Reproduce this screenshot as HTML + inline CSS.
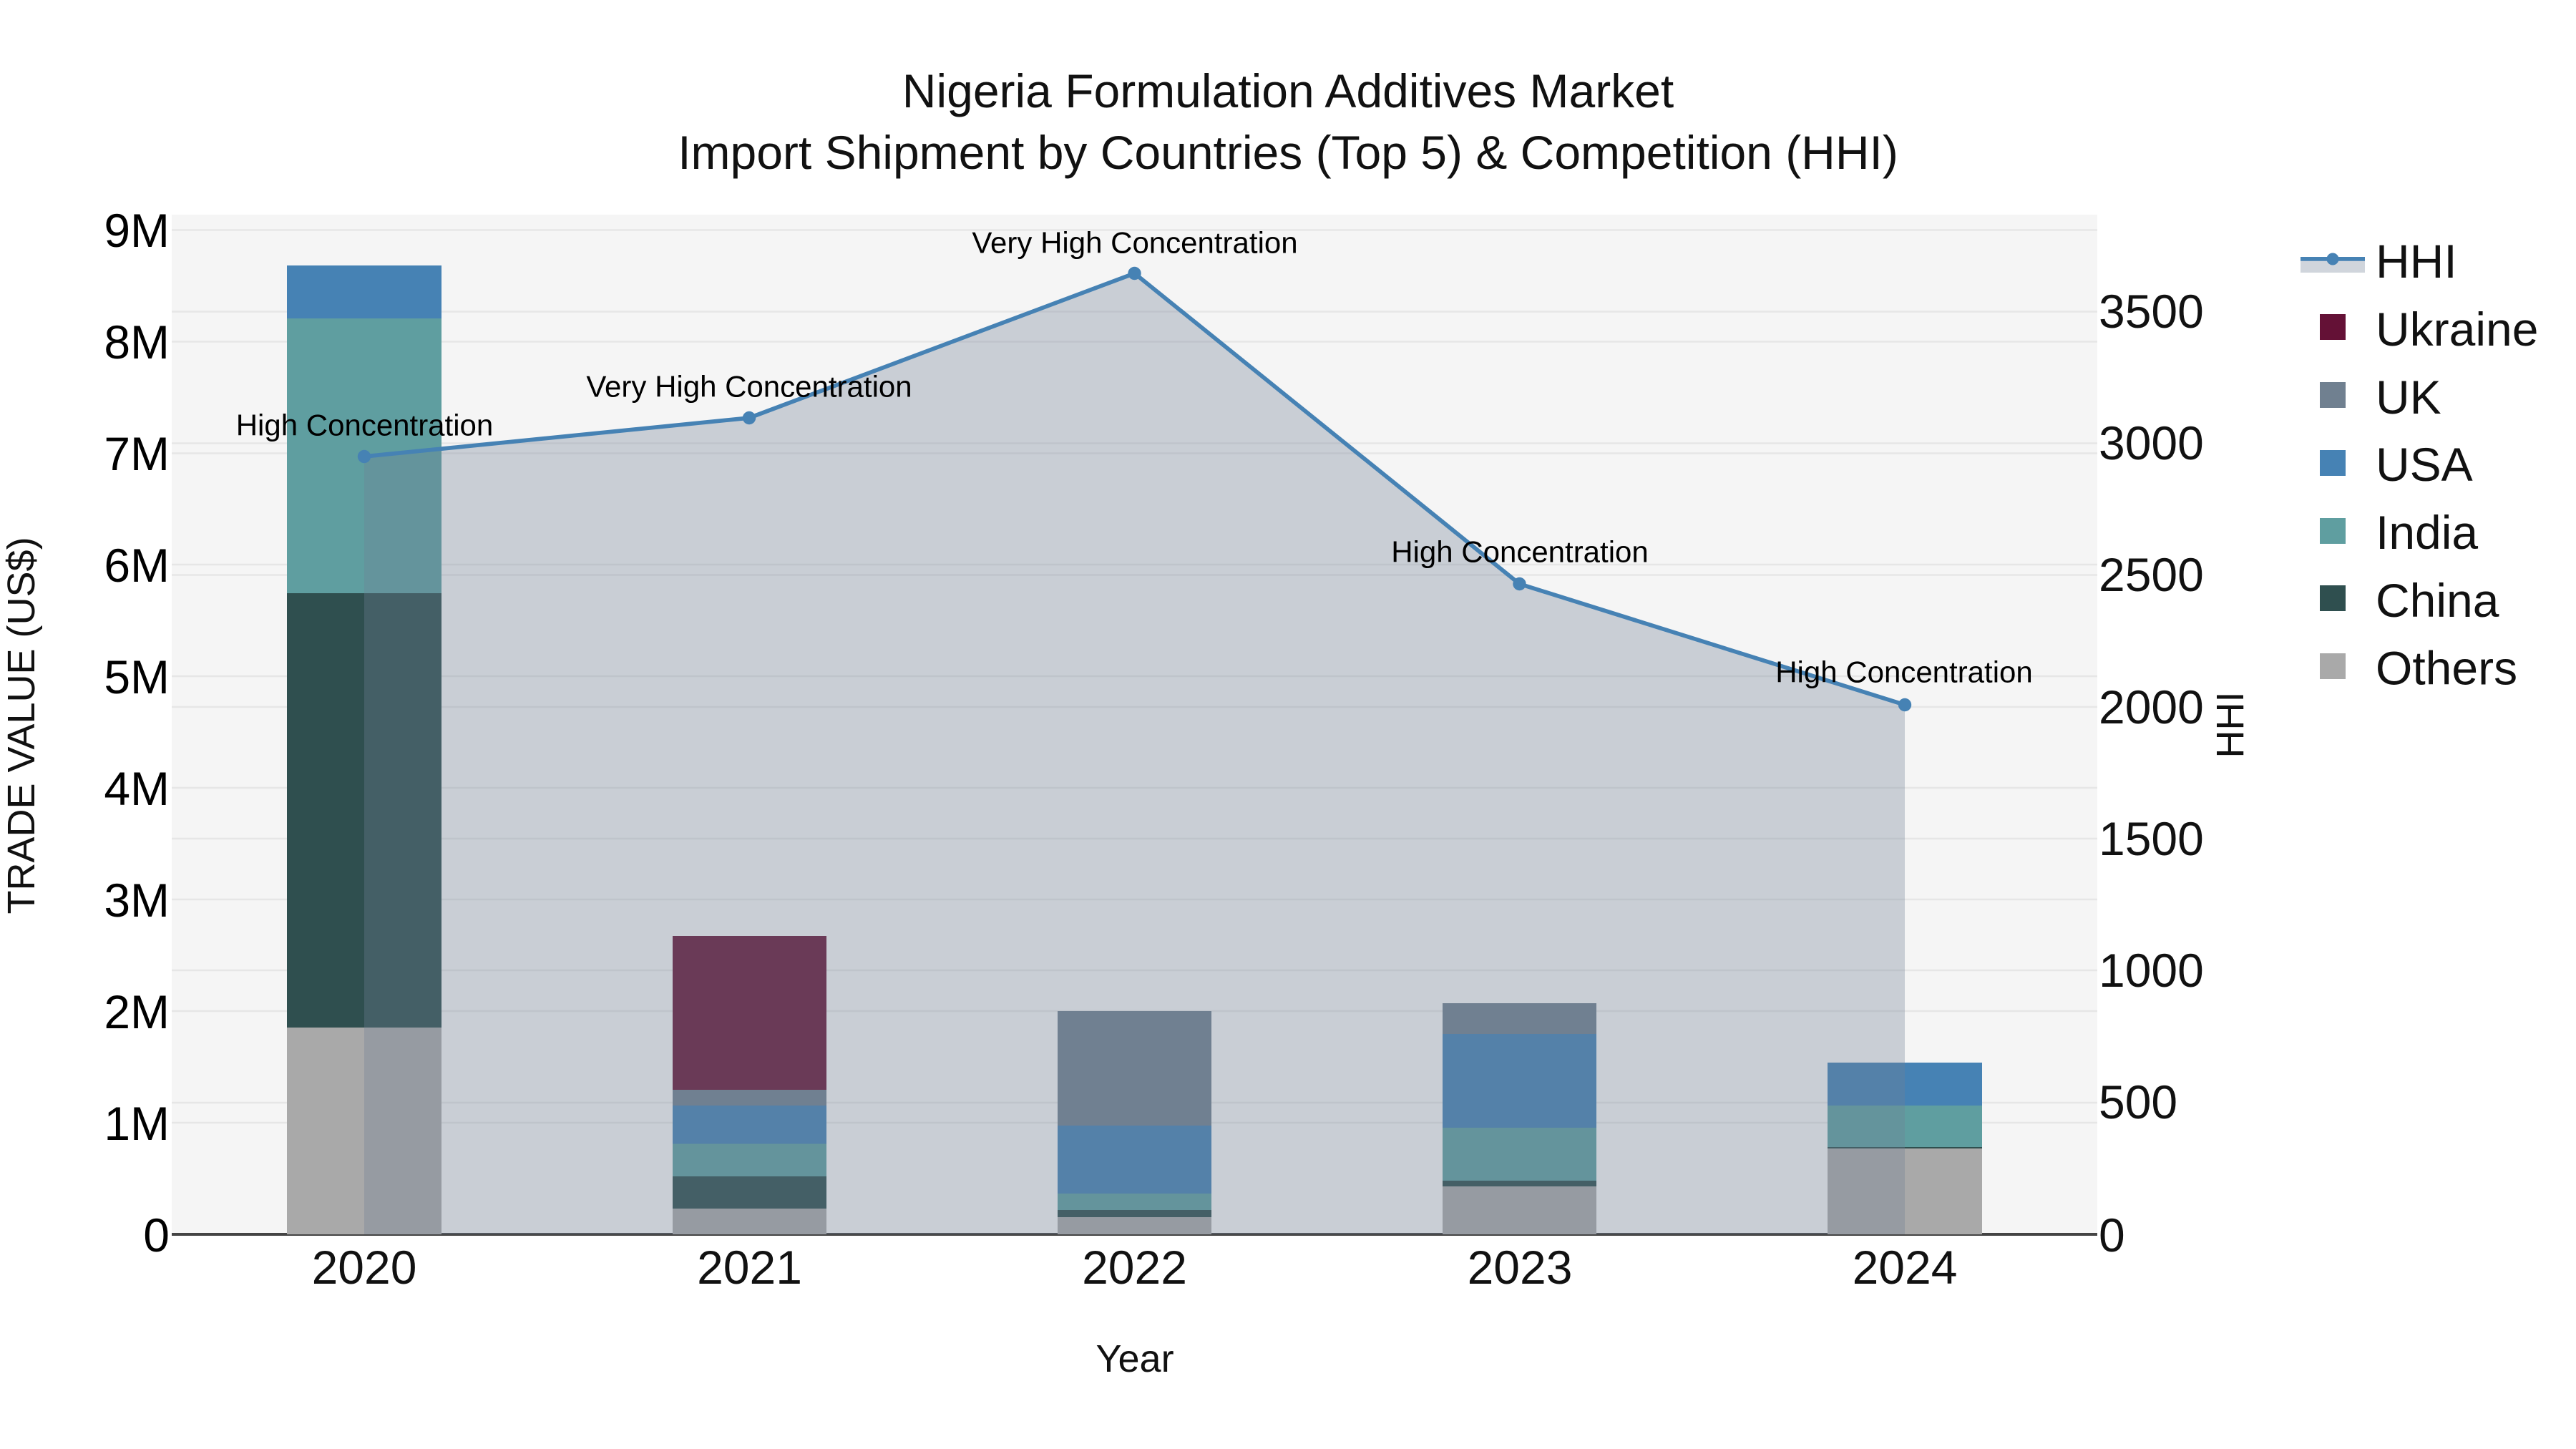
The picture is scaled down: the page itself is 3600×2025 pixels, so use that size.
<!DOCTYPE html>
<html><head><meta charset="utf-8"><style>
html,body{margin:0;padding:0;background:#fff}
svg{display:block}
text{font-family:"Liberation Sans",Arial,sans-serif;white-space:pre}
</style></head><body>
<svg width="3600" height="2025" viewBox="0 0 3600 2025" xmlns="http://www.w3.org/2000/svg">
<rect width="3600" height="2025" fill="#fff"/>
<rect x="240" y="300" width="2691" height="1425" fill="#f5f5f5"/>
<g stroke="#e6e6e6" stroke-width="2.5">
<path d="M240 321.5H2931M240 477.5H2931M240 633.5H2931M240 789H2931M240 945H2931M240 1101H2931M240 1257H2931M240 1413H2931M240 1569H2931"/>
<path d="M240 435.5H2931M240 619.5H2931M240 803.5H2931M240 988H2931M240 1172H2931M240 1356H2931M240 1541H2931"/>
</g>
<rect x="240" y="1723" width="2691" height="4" fill="#444"/>
<g shape-rendering="crispEdges">
<rect x="401" y="1436" width="216" height="289" fill="#a9a9a9"/>
<rect x="401" y="829" width="216" height="607" fill="#2f4f4f"/>
<rect x="401" y="445" width="216" height="384" fill="#5f9ea0"/>
<rect x="401" y="371" width="216" height="74" fill="#4682b4"/>

<rect x="940" y="1689" width="215" height="36" fill="#a9a9a9"/>
<rect x="940" y="1644" width="215" height="45" fill="#2f4f4f"/>
<rect x="940" y="1598.5" width="215" height="45.5" fill="#5f9ea0"/>
<rect x="940" y="1545" width="215" height="53.5" fill="#4682b4"/>
<rect x="940" y="1523" width="215" height="22" fill="#708090"/>
<rect x="940" y="1308" width="215" height="215" fill="#671839"/>

<rect x="1478" y="1701" width="215" height="24" fill="#a9a9a9"/>
<rect x="1478" y="1691" width="215" height="10" fill="#2f4f4f"/>
<rect x="1478" y="1668" width="215" height="23" fill="#5f9ea0"/>
<rect x="1478" y="1573" width="215" height="95" fill="#4682b4"/>
<rect x="1478" y="1413" width="215" height="160" fill="#708090"/>

<rect x="2016" y="1658" width="215" height="67" fill="#a9a9a9"/>
<rect x="2016" y="1650" width="215" height="8" fill="#2f4f4f"/>
<rect x="2016" y="1576" width="215" height="74" fill="#5f9ea0"/>
<rect x="2016" y="1445" width="215" height="131" fill="#4682b4"/>
<rect x="2016" y="1402" width="215" height="43" fill="#708090"/>

<rect x="2554" y="1605" width="216" height="120" fill="#a9a9a9"/>
<rect x="2554" y="1603" width="216" height="2" fill="#2f4f4f"/>
<rect x="2554" y="1545" width="216" height="58" fill="#5f9ea0"/>
<rect x="2554" y="1485" width="216" height="60" fill="#4682b4"/>
</g>
<path d="M509 638L1047 584L1585.500 382L2123.500 816L2662 985V1725H509Z" fill="#708096" fill-opacity="0.33"/>
<path d="M509 638L1047 584L1585.500 382L2123.500 816L2662 985" fill="none" stroke="#4682b4" stroke-width="5.750"/>
<g fill="#4682b4">
<circle cx="509" cy="638" r="9.200"/><circle cx="1047" cy="584" r="9.200"/><circle cx="1585.500" cy="382" r="9.200"/><circle cx="2123.500" cy="816" r="9.200"/><circle cx="2662" cy="985" r="9.200"/>
</g>
<g font-size="42" fill="#000" text-anchor="middle">
<text x="509.500" y="608.500">High Concentration</text>
<text x="1047" y="554.500">Very High Concentration</text>
<text x="1586" y="353.500">Very High Concentration</text>
<text x="2124" y="785.500">High Concentration</text>
<text x="2661" y="953.500">High Concentration</text>
</g>
<g font-size="66" fill="#111" text-anchor="middle">
<text x="1800" y="150">Nigeria Formulation Additives Market</text>
<text x="1800" y="236">Import Shipment by Countries (Top 5) &amp; Competition (HHI)</text>
</g>
<g font-size="66" fill="#000" text-anchor="end">
<text x="237" y="345">9M</text><text x="237" y="501">8M</text><text x="237" y="657">7M</text><text x="237" y="813">6M</text><text x="237" y="969">5M</text><text x="237" y="1125">4M</text><text x="237" y="1281">3M</text><text x="237" y="1437">2M</text><text x="237" y="1593">1M</text><text x="237" y="1749">0</text>
</g>
<g font-size="66" fill="#111" text-anchor="middle">
<text x="509" y="1794">2020</text><text x="1047.500" y="1794">2021</text><text x="1585.500" y="1794">2022</text><text x="2124" y="1794">2023</text><text x="2662" y="1794">2024</text>
</g>
<g font-size="66" fill="#111">
<text x="2933" y="458">3500</text><text x="2933" y="642">3000</text><text x="2933" y="826">2500</text><text x="2933" y="1011">2000</text><text x="2933" y="1195">1500</text><text x="2933" y="1379">1000</text><text x="2933" y="1563">500</text><text x="2933" y="1749">0</text>
</g>
<text x="1586" y="1917" font-size="54" fill="#111" text-anchor="middle">Year</text>
<text transform="translate(48 1014) rotate(-90)" font-size="54" fill="#111" text-anchor="middle">TRADE VALUE (US$)</text>
<text transform="translate(3135 1013) rotate(-90)" font-size="54" fill="#111" text-anchor="middle">HHI</text>
<rect x="3215" y="362" width="90" height="19" fill="#708096" fill-opacity="0.33"/>
<rect x="3215" y="359" width="90" height="5.750" fill="#4682b4"/>
<circle cx="3260" cy="362" r="8.500" fill="#4682b4"/>
<g shape-rendering="crispEdges">
<rect x="3242" y="439" width="36" height="36" fill="#641136"/>
<rect x="3242" y="534" width="36" height="36" fill="#708090"/>
<rect x="3242" y="629" width="36" height="36" fill="#4682b4"/>
<rect x="3242" y="724" width="36" height="36" fill="#5f9ea0"/>
<rect x="3242" y="818" width="36" height="36" fill="#2f4f4f"/>
<rect x="3242" y="913" width="36" height="36" fill="#a9a9a9"/>
</g>
<g font-size="66" fill="#111">
<text x="3320" y="388">HHI</text>
<text x="3320" y="483">Ukraine</text>
<text x="3320" y="578">UK</text>
<text x="3320" y="672">USA</text>
<text x="3320" y="767">India</text>
<text x="3320" y="862">China</text>
<text x="3320" y="956.500">Others</text>
</g>
</svg>
</body></html>
